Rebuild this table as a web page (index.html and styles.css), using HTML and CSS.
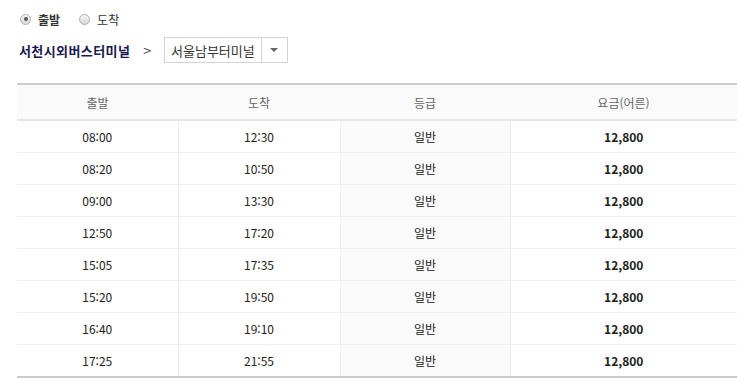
FILE: index.html
```html
<!DOCTYPE html>
<html lang="ko">
<head>
<meta charset="utf-8">
<link rel="stylesheet" href="styles.css">
</head>
<body>
<div class="page">
  <div class="radios">
    <label class="radio"><span class="dot on"></span><span class="rlabel strong">출발</span></label>
    <label class="radio"><span class="dot"></span><span class="rlabel">도착</span></label>
  </div>
  <div class="route">
    <span class="from">서천시외버스터미널</span>
    <span class="arrow">&gt;</span>
    <div class="select">
      <span class="sel-text">서울남부터미널</span>
      <span class="sel-btn"><svg width="8" height="4" viewBox="0 0 8 4"><path d="M0 0H8L4 4Z" fill="#666"/></svg></span>
    </div>
  </div>
  <table class="tbl">
    <thead>
      <tr><th class="c1">출발</th><th class="c2">도착</th><th class="c3">등급</th><th class="c4">요금(어른)</th></tr>
    </thead>
    <tbody>
      <tr><td>08:00</td><td>12:30</td><td class="grade">일반</td><td class="price">12,800</td></tr>
      <tr><td>08:20</td><td>10:50</td><td class="grade">일반</td><td class="price">12,800</td></tr>
      <tr><td>09:00</td><td>13:30</td><td class="grade">일반</td><td class="price">12,800</td></tr>
      <tr><td>12:50</td><td>17:20</td><td class="grade">일반</td><td class="price">12,800</td></tr>
      <tr><td>15:05</td><td>17:35</td><td class="grade">일반</td><td class="price">12,800</td></tr>
      <tr><td>15:20</td><td>19:50</td><td class="grade">일반</td><td class="price">12,800</td></tr>
      <tr><td>16:40</td><td>19:10</td><td class="grade">일반</td><td class="price">12,800</td></tr>
      <tr><td>17:25</td><td>21:55</td><td class="grade">일반</td><td class="price">12,800</td></tr>
    </tbody>
  </table>
</div>
</body>
</html>
```

FILE: styles.css
```css
html, body { margin: 0; padding: 0; background: #fff; }
body { font-family: "Noto Sans CJK KR", "Noto Sans", sans-serif; font-size: 12px; color: #222; }
.page { padding: 11px 4px 0 17px; }
.radios { display: flex; align-items: center; gap: 19px; height: 16px; margin-left: 3px; }
.radio { display: flex; align-items: center; gap: 7px; }
.dot { width: 11px; height: 11px; border: 1px solid #b0b0b0; border-radius: 50%; background: linear-gradient(#f6f6f6, #d8d8d8); box-sizing: border-box; position: relative; display: inline-block; }
.dot.on::after { content: ""; position: absolute; left: 2.5px; top: 2.5px; width: 4px; height: 4px; border-radius: 50%; background: #555; }
.rlabel { color: #333; font-size: 12px; }
.rlabel.strong { font-weight: bold; }
.route { display: flex; align-items: center; margin-top: 10px; height: 26px; margin-left: 2px; }
.from { font-weight: bold; color: #1a1a50; font-size: 13px; letter-spacing: 0.4px; }
.arrow { margin: 0 13px 0 13px; color: #444; font-size: 14px; }
.select { display: flex; align-items: stretch; border: 1px solid #d4d4d4; height: 24px; }
.sel-text { padding: 0 6px; display: flex; align-items: center; color: #333; font-size: 13px; border-right: 1px solid #d4d4d4; }
.sel-btn { width: 25px; display: flex; align-items: center; justify-content: center; }
.tbl { margin-top: 20px; width: 720px; border-collapse: collapse; table-layout: fixed; border-top: 2px solid #cccccc; border-bottom: 2px solid #cccccc; }
.tbl th { height: 34px; background: #fafafa; color: #666; font-weight: normal; font-size: 12px; border-bottom: 2px solid #e6e6e6; padding: 0; }
.tbl td { height: 31px; text-align: center; padding: 0; border-bottom: 1px solid #efefef; border-left: 1px solid #f0f0f0; font-size: 12px; color: #222; }
.tbl td:first-child { border-left: none; }
.tbl tbody tr:last-child td { border-bottom: none; }
.c1 { width: 161px; }
.c2 { width: 162px; }
.c3 { width: 170px; }
.c4 { width: 227px; }
.grade { background: #fafafa; font-size: 13px; }
.price { font-weight: bold; color: #555; }
```
